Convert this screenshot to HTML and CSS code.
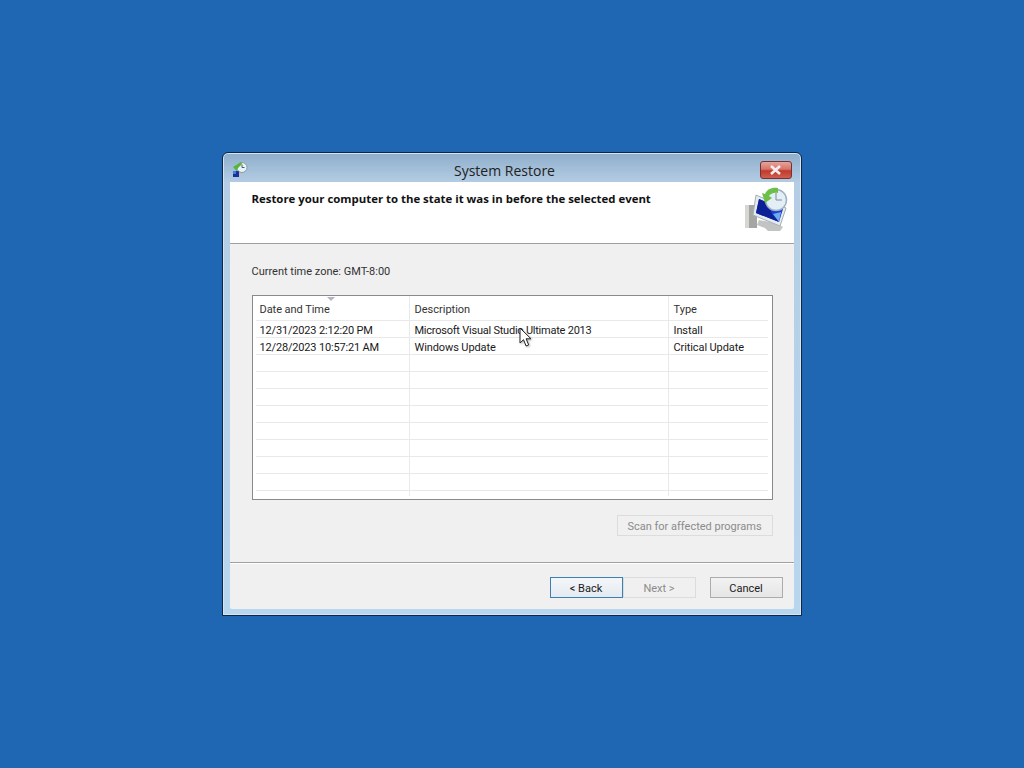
FILE: index.html
```html
<!DOCTYPE html>
<html lang="en">
<head>
    <meta charset="UTF-8">
    <title>System Restore</title>
    <link rel="stylesheet" href="styles.css">
</head>
<body>

    <div class="window">
        <div class="titlebar">
            <svg class="title-icon" width="16" height="16" viewBox="0 0 16 16">
                <rect x="1" y="10" width="6" height="6" fill="#1c2f9c"/>
                <rect x="1" y="10" width="3" height="3" fill="#3f7fd8"/>
                <rect x="7" y="12" width="3" height="3" fill="#b9c0c8"/>
                <circle cx="10" cy="6.5" r="5" fill="#e8f2f8" stroke="#84a0a8"/>
                <path d="M10 3.5v3h2.5" fill="none" stroke="#4a5a68"/>
                <path d="M9 1L1 6l4 4.5V8l5-5z" fill="#58b535"/>
            </svg>
            <span class="title-text">System Restore</span>
            <button class="close-btn">
                <svg width="13" height="10" viewBox="0 0 13 10">
                    <path d="M2 1l9 8M11 1L2 9" stroke="#f4eeee" stroke-width="2.6"/>
                </svg>
            </button>
        </div>

        <div class="client">
            <div class="header">
                <h1>Restore your computer to the state it was in before the selected event</h1>
                <svg class="header-icon" width="48" height="48" viewBox="0 0 48 48">
                    <rect x="3" y="19" width="12" height="23" fill="#a5a5a1"/>
                    <rect x="3" y="19" width="4" height="23" fill="#d6d6d2"/>
                    <path d="M17 34l-2 5 8 3 3 3h12l3-4-7-4z" fill="#c2c4c3"/>
                    <path d="M14 9l30 13-6 18L11 29z" fill="#e6eaec" stroke="#a4b0b8"/>
                    <path d="M17 13l24 10-4 13-23-9z" fill="#1a3fd0"/>
                    <path d="M17 13l9 4 4 11 7 8-23-9z" fill="#0c1f96"/>
                    <path d="M31 28l8-2-2 10z" fill="#6fa8ec"/>
                    <circle cx="34" cy="14" r="10.5" fill="#e3eef6" stroke="#9fb2c2" stroke-width="1.5"/>
                    <path d="M34 7v7h6" fill="none" stroke="#7d8b98"/>
                    <path d="M36 2c-6-1-11 1-13 6l-3-1 3 10 7-5-3-2c1-2 5-4 9-3z" fill="#6cc04a"/>
                </svg>
            </div>

            <div class="body">
                <p class="zone">Current time zone: GMT-8:00</p>

                <div class="list">
                    <div class="sort-arrow"></div>
                    <div class="row head">
                        <div>Date and Time</div>
                        <div>Description</div>
                        <div>Type</div>
                    </div>
                    <div class="row">
                        <div class="date">12/31/2023 2:12:20 PM</div>
                        <div class="tight">Microsoft Visual Studio Ultimate 2013</div>
                        <div>Install</div>
                    </div>
                    <div class="row">
                        <div class="date">12/28/2023 10:57:21 AM</div>
                        <div>Windows Update</div>
                        <div>Critical Update</div>
                    </div>
                    <div class="row"><div></div><div></div><div></div></div>
                    <div class="row"><div></div><div></div><div></div></div>
                    <div class="row"><div></div><div></div><div></div></div>
                    <div class="row"><div></div><div></div><div></div></div>
                    <div class="row"><div></div><div></div><div></div></div>
                    <div class="row"><div></div><div></div><div></div></div>
                    <div class="row"><div></div><div></div><div></div></div>
                    <div class="row"><div></div><div></div><div></div></div>
                    <div class="row last"><div></div><div></div><div></div></div>
                </div>

                <div class="scan-row">
                    <button class="btn scan" disabled>Scan for affected programs</button>
                </div>
            </div>

            <div class="footer">
                <button class="btn default">&lt; Back</button>
                <button class="btn" disabled>Next &gt;</button>
                <button class="btn cancel">Cancel</button>
            </div>
        </div>
    </div>

    <svg class="cursor" width="14" height="21" viewBox="0 0 14 21">
        <path d="M1 1v15l3.5-3.3 2.6 6.3 2.6-1.1-2.6-6.1H12z" fill="#fff" stroke="#222" stroke-width="1"/>
    </svg>

</body>
</html>
```

FILE: styles.css
```css
* {
    box-sizing: border-box;
}

html, body {
    height: 100%;
}

body {
    margin: 0;
    display: flex;
    align-items: center;
    justify-content: center;
    background-color: #1f66b3;
    font-family: Roboto, "Open Sans", sans-serif;
    font-size: 11px;
    color: #1a1a1a;
}

.window {
    width: 580px;
    height: 464px;
    margin-left: -1px;
    display: flex;
    flex-direction: column;
    border: 1px solid #0c2748;
    border-radius: 6px 6px 0 0;
    background: linear-gradient(to bottom, #8faecb 0, #b4cde4 30px, #b9d6ef 100%);
    box-shadow: inset 0 0 0 1px #d4e4f2;
}

.titlebar {
    height: 29px;
    flex-shrink: 0;
    display: flex;
    align-items: center;
    position: relative;
}

.title-icon {
    position: absolute;
    left: 9px;
    top: 8px;
}

.title-text {
    flex: 1;
    text-align: center;
    font-family: "Open Sans", sans-serif;
    font-size: 14px;
    color: #222;
    padding-top: 6px;
    padding-right: 14px;
}

.close-btn {
    position: absolute;
    right: 9px;
    top: 8px;
    width: 32px;
    height: 18px;
    padding: 0;
    display: flex;
    align-items: center;
    justify-content: center;
    border: 1px solid #7a3030;
    border-radius: 3px;
    background: linear-gradient(to bottom, #e4a49c 0, #d87468 45%, #c0392c 55%, #cf5f50 100%);
}

.client {
    flex: 1;
    margin: 0 7px 6px 7px;
    display: flex;
    flex-direction: column;
    background-color: #f0f0f0;
    border-radius: 0 0 2px 2px;
}

.header {
    height: 62px;
    flex-shrink: 0;
    background-color: #fff;
    border-bottom: 1px solid #a0a0a0;
    display: flex;
    justify-content: space-between;
    padding: 9px 4px 0 22px;
}

.header h1 {
    margin: 0;
    font-family: "Open Sans", sans-serif;
    font-size: 11.4px;
    line-height: 16px;
    font-weight: 700;
    color: #111;
}

.header-icon {
    margin-top: -5px;
}

.body {
    flex: 1;
    padding: 0 21px 0 22px;
}

.zone {
    margin: 20px 0 0 0;
    height: 16px;
    line-height: 16px;
    color: #333;
}

.list {
    position: relative;
    height: 205px;
    margin-top: 15px;
    padding: 0 4px 0 3px;
    background-color: #fff;
    border: 1px solid #8a8a8a;
    overflow: hidden;
}

.sort-arrow {
    position: absolute;
    left: 74px;
    top: 1px;
    border-left: 4px solid transparent;
    border-right: 4px solid transparent;
    border-top: 4px solid #b0b4c4;
}

.row {
    display: grid;
    grid-template-columns: 154px 259px 1fr;
    grid-template-rows: 100%;
    height: 17px;
    line-height: 16px;
    border-bottom: 1px solid #e9e9e9;
}

.row > div {
    padding: 2px 0 0 5px;
    white-space: nowrap;
    letter-spacing: -0.1px;
    border-right: 1px solid #e9e9e9;
}

.row > div:last-child {
    border-right: none;
}

.row > .date {
    padding-left: 4px;
    letter-spacing: -0.17px;
}

.row > .tight {
    letter-spacing: -0.23px;
}

.row.head {
    height: 25px;
    line-height: 26px;
    color: #333;
}

.row.head > div {
    padding-top: 1px;
    letter-spacing: 0;
}

.row.head > div:first-child {
    padding-left: 4px;
    letter-spacing: -0.05px;
}

.row.last {
    height: 5px;
    border-bottom: none;
}

.scan-row {
    display: flex;
    justify-content: flex-end;
    margin-top: 15px;
}

.footer {
    height: 47px;
    flex-shrink: 0;
    border-top: 1px solid #a0a0a0;
    box-shadow: inset 0 1px 0 #fff;
    display: flex;
    justify-content: flex-end;
    padding: 14px 11px 0 0;
}

.btn {
    width: 73px;
    height: 21px;
    padding: 1px 0 0 0;
    font-family: inherit;
    font-size: 11px;
    color: #1a1a1a;
    background: linear-gradient(to bottom, #f2f2f2, #e6e6e6);
    border: 1px solid #acacac;
}

.btn:disabled {
    color: #8b8b8b;
    background: #f0f0f0;
    border-color: #dcdcdc;
}

.btn.default {
    border-color: #3c7fb1;
    background: linear-gradient(to bottom, #f4f7fa, #e4eaf0);
}

.btn.cancel {
    margin-left: 14px;
}

.btn.scan {
    width: 156px;
}

.cursor {
    position: absolute;
    left: 519px;
    top: 327px;
    filter: drop-shadow(1px 1px 1px rgba(0, 0, 0, 0.3));
}
```
